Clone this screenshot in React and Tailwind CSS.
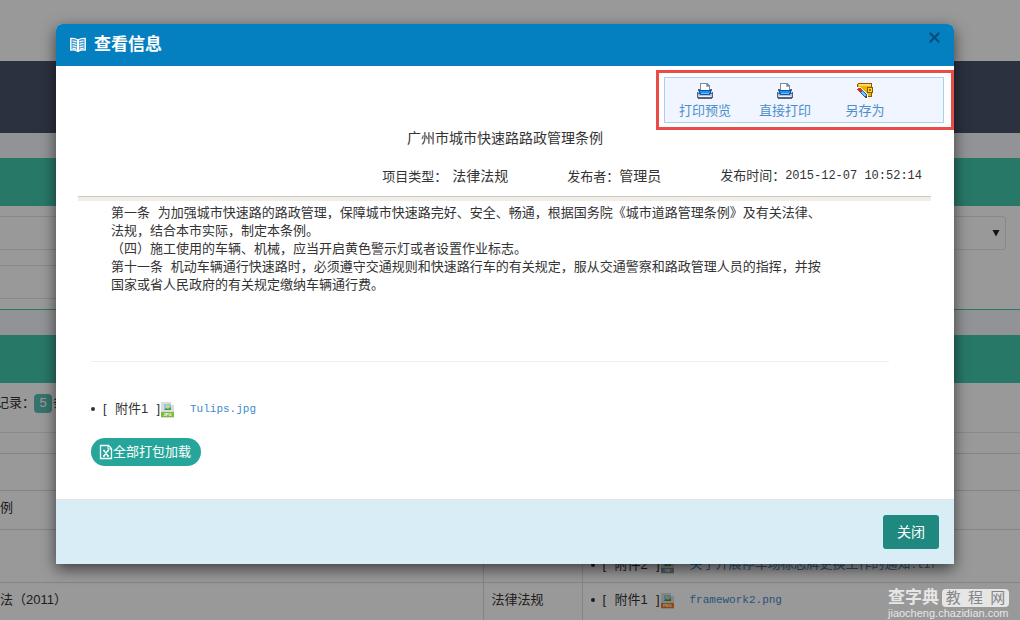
import { X } from "lucide-react";

const SONG = "font-['Liberation_Sans','Noto_Sans_CJK_SC',sans-serif]";
const MONO = "font-['Liberation_Mono','Noto_Sans_CJK_SC',monospace]";

const lines = [
  "第一条 为加强城市快速路的路政管理，保障城市快速路完好、安全、畅通，根据国务院《城市道路管理条例》及有关法律、",
  "法规，结合本市实际，制定本条例。",
  "（四）施工使用的车辆、机械，应当开启黄色警示灯或者设置作业标志。",
  "第十一条 机动车辆通行快速路时，必须遵守交通规则和快速路行车的有关规定，服从交通警察和路政管理人员的指挥，并按",
  "国家或省人民政府的有关规定缴纳车辆通行费。",
];

const tools = [
  { label: "打印预览", Icon: PrinterIcon },
  { label: "直接打印", Icon: PrinterIcon },
  { label: "另存为", Icon: SaveAsIcon },
];

export default function App() {
  return (
    <div className={`relative h-screen overflow-hidden text-[13px] text-[#333] ${SONG}`}>
      <Backdrop />
      <div className="absolute inset-0 bg-black/40" />
      <Watermark />
      <div className="absolute inset-x-0 top-0 pt-6 pl-14 pr-[66px]">
        <Dialog />
      </div>
    </div>
  );
}

function Backdrop() {
  return (
    <div className="bg-white">
      <div className="h-[61px]" />
      <div className="h-[72px] bg-[#485369]" />
      <div className="h-[25px] bg-[#f3f5fb]" />
      <div className="h-12 bg-[#43c9ad]" />
      <div className="h-[103px] pt-[10px] pr-[14px]">
        <div className="flex h-[34px] items-center rounded-r border border-l-0 border-[#e5e5e5] pr-[5px]">
          <select aria-label="类型" className="h-8 grow appearance-none" />
          <svg width="8" height="8" viewBox="0 0 8 8"><path d="M.5 1h7L4 7.500z" fill="#222" /></svg>
        </div>
        <div className="mt-[15px] h-[34px] w-1/2 border-y border-[#e5e5e5]" />
      </div>
      <div className="h-[26px] border-t border-[#43c9ad] bg-[#f3f5fb]" />
      <div className="h-12 bg-[#43c9ad]" />
      <div className="flex h-[49px] items-start pt-2">
        <span className="-ml-1 flex h-6 items-center">
          记录：
          <b className="-ml-px mr-px flex h-[19px] w-[18px] items-center justify-center rounded bg-[#5bc0b5] font-normal text-white">5</b>
          条
        </span>
      </div>
      <table className="w-full table-fixed border-collapse">
        <colgroup>
          <col className="w-[483px]" />
          <col className="w-[99px]" />
          <col />
        </colgroup>
        <tbody>
          <tr className="h-[21px] border-t border-[#e7e7e7]"><td /><td /><td /></tr>
          <tr className="h-[37px] border-t border-[#ddd]"><td /><td /><td /></tr>
          <tr className="h-[39px] border-t border-[#ddd]"><td className="pb-1">例</td><td /><td /></tr>
          <tr className="h-[53px] border-t border-[#ddd]">
            <td />
            <td className="border-l border-[#ddd]" />
            <td className="border-l border-[#ddd] pl-2 align-bottom">
              <div className="flex h-[34px] items-center">
                <Attachment n={2} kind="tif" name="关于开展停车场标志牌更换工作的通知" />
              </div>
            </td>
          </tr>
          <tr className="h-[38px] border-t border-[#ddd]">
            <td className="pb-1">法（2011）</td>
            <td className="border-l border-[#ddd] pb-1 pl-2">法律法规</td>
            <td className="border-l border-[#ddd] pb-1 pl-2">
              <Attachment n={1} kind="png" name="framework2" />
            </td>
          </tr>
        </tbody>
      </table>
    </div>
  );
}

function Dialog() {
  return (
    <div role="dialog" aria-labelledby="dialog-title" className="rounded-t-md bg-white shadow-[0_5px_15px_rgba(0,0,0,0.6)]">
      <header className="flex h-[42px] items-start justify-between rounded-t-md bg-[#047fbf] pr-[11px] pl-[14px]">
        <h1 id="dialog-title" className="flex h-[42px] items-center gap-2 text-[17px] font-bold text-white">
          <BookIcon />
          查看信息
        </h1>
        <button aria-label="关闭窗口" className="mt-[5px] text-[#034c73]">
          <X size={17} strokeWidth={2.5} />
        </button>
      </header>

      <div className="flex justify-end pt-1">
        <div className="h-[60px] w-[298px] border-[3px] border-[#e94b46] p-1 pl-[5px]">
          <div className="flex h-[46px] w-[280px] border border-[#a8d1ec] bg-[#f0f5ff]">
            {tools.map(({ label, Icon }) => (
              <button key={label} className="flex w-20 flex-col items-center pt-[5px] leading-5 text-[#4c8fca]">
                <Icon />
                <span className="mt-0.5">{label}</span>
              </button>
            ))}
          </div>
        </div>
      </div>

      <h2 className="h-4 text-center text-[14px] leading-4">广州市城市快速路路政管理条例</h2>

      <div className="mr-[23px] ml-[22px] mt-5 flex h-[31px] items-start justify-end border-b border-[#cfccbc] pr-[9px] leading-5">
        <span>项目类型：<span className="ml-[5px] text-[14px]">法律法规</span></span>
        <span className="ml-[59px]">发布者：<span className="text-[14px]">管理员</span></span>
        <span className="ml-[59px] flex">发布时间：<span className={`text-[12px] ${MONO}`}>2015-12-07 10:52:14</span></span>
      </div>
      <div className="mr-[23px] ml-[22px] h-1 bg-[#f1eee9]" />

      <div className={`h-[160px] pt-1 pl-[55px] leading-[18px] ${MONO}`}>
        {lines.map((line) => (
          <p key={line} className="whitespace-nowrap">{line}</p>
        ))}
      </div>
      <hr className="mr-[65px] ml-[35px] border-[#eee]" />

      <div className="pt-[37px] pl-[35px]">
        <Attachment n={1} kind="jpg" name="Tulips" />
        <button className="mt-[19px] flex h-7 w-[110px] items-center rounded-full bg-[#26a69a] pl-2 text-white">
          <SheetIcon />
          全部打包加载
        </button>
      </div>

      <footer className="mt-[33px] flex h-[65px] justify-end border-t border-[#e5e5e5] bg-[#d9edf7] pt-[15px] pr-[15px]">
        <button className="h-[34px] w-14 rounded-[3px] bg-[#1f897f] text-[14px] text-white">关闭</button>
      </footer>
    </div>
  );
}

function Attachment({ n, kind, name }) {
  // CJK names keep the body size, latin names use the smaller mono size
  const size = /^[\w.]+$/.test(name) ? "text-[11px]" : "text-[13px]";
  return (
    <div className="flex h-5 items-center whitespace-nowrap">
      <span className="mr-2 h-1 w-1 rounded-full bg-[#333]" />
      <span className="flex w-[57px] justify-between"><span>[</span><span>附件{n}</span><span>]</span></span>
      <FileIcon kind={kind} />
      <a href="#" className={`ml-[14px] text-[#428bca] ${MONO}`}>
        <span className={size}>{name}</span>
        <span className="text-[11px]">.{kind}</span>
      </a>
    </div>
  );
}

function FileIcon({ kind }) {
  const color = { jpg: "#7db93c", png: "#ef7a1a", tif: "#8d9aa6" }[kind];
  return (
    <svg width="16" height="16" viewBox="0 0 16 16" className="mt-0.5">
      <path d="M1 0h10l3 3v13h-13z" fill="#d9dddf" />
      <path d="M11 0v3h3z" fill="#fff" />
      <path d="M4 2h7v6h-7z" fill="#8cc9ee" />
      <circle cx="7.500" cy="4.500" r="1.500" fill="#f2d43a" />
      <path d="M4 8l2-2 2 1 3-2v3z" fill="#4e9a3c" />
      <path d="M1 10h13v5h-13z" fill={color} />
      <text x="7.500" y="14" textAnchor="middle" fontSize="4" fontWeight="700" fill="#fff">{kind.toUpperCase()}</text>
    </svg>
  );
}

function BookIcon() {
  return (
    <svg width="16" height="16" viewBox="0 0 16 16" fill="none" stroke="#fff">
      <path d="M.800 1.500q4-.5 7.200 1.500 3.200-2 7.200-1.500v11.500q-4-.5-7.200 1.500-3.200-2-7.200-1.500z" fill="#fff" fillOpacity="0.250" strokeWidth="1.400" />
      <path d="M8 3v12" strokeWidth="2" />
      <path d="M2.500 4q2.200 0 4 1.100M2.500 6.500q2.200 0 4 1.100M2.500 9q2.200 0 4 1.100M2.500 11.300q2.200 0 4 1.100M13.500 4q-2.200 0-4 1.100M13.500 6.500q-2.200 0-4 1.100M13.500 9q-2.200 0-4 1.100M13.500 11.300q-2.200 0-4 1.100" strokeWidth="1.200" />
    </svg>
  );
}

function PrinterIcon() {
  return (
    <svg width="16" height="16" viewBox="0 0 16 16" shapeRendering="crispEdges" className="shrink-0">
      <path d="M3 0h7l3 3v5h-10z" fill="#8189a0" />
      <path d="M4 1h6v2h2v5h-8z" fill="#fff" />
      <path d="M9 1h1v2h2v1h-3z" fill="#a9adc4" />
      <path d="M1 6h2v1h10v-1h2v3h1v6h-1v1h-14v-1h-1v-6h1z" fill="#59617a" />
      <path d="M1 8h14v2h-14z" fill="#c6cddc" />
      <path d="M1 11h14v3h-14z" fill="#b9c1d4" />
      <path d="M2 7h12v4h-1v1h-10v-1h-1z" fill="#0b57b0" />
      <path d="M3 8h10v2h-10z" fill="#1c92f0" />
      <path d="M4 10h8v1h-8z" fill="#6cc4ff" />
      <path d="M4 4h8v3h-8z" fill="#fff" />
      <path d="M2 13h12v1h-12z" fill="#eef1f6" />
    </svg>
  );
}

function SaveAsIcon() {
  return (
    <svg width="16" height="16" viewBox="0 0 16 16" shapeRendering="crispEdges" className="shrink-0">
      <path d="M1 0h14v4h1v6h-1v4h-5l-9-9h-1v-4h1z" fill="#8c5a00" />
      <path d="M1 1h13v12h-4l-9-8z" fill="#f0b400" />
      <path d="M2 1h12v2h-12z" fill="#ffdc55" />
      <path d="M10 4h6v6h-6z" fill="#8c5a00" />
      <path d="M11 5h4v4h-4z" fill="#ffd52b" />
      <path d="M12 6h2v2h-2z" fill="#a06a00" />
      <path d="M0 4h3l8 8v4h-3l-8-8z" fill="#fff" />
      <path d="M1 5h2l2 2-2 3-3-3v-1z" fill="#e02a22" />
      <path d="M5 7l5 5-2 3-5-5z" fill="#1b5fb8" />
      <path d="M5 8l4 4-1 2-4-4z" fill="#6fc0ff" />
      <path d="M10 12v3h-2z" fill="#5a3a10" />
    </svg>
  );
}

function SheetIcon() {
  return (
    <svg width="14" height="16" viewBox="0 0 14 16" fill="none" stroke="#fff">
      <path d="M1.500 1.500h8l3 3v10h-11z" strokeWidth="1.300" />
      <path d="M9 1.500v3.500h3.500" />
      <path d="M5 6.500l4 5.500M9 6.500l-4 5.500M4 6.500h2M8 6.500h2M4 12h2M8 12h2" strokeWidth="1.300" />
    </svg>
  );
}

function Watermark() {
  return (
    <div className="absolute right-[11px] bottom-px text-[#e6e6e6]">
      <div className="flex items-center gap-[3px]">
        <span className="text-[17px] leading-[18px] font-bold">查字典</span>
        <span className="flex h-[18px] w-[67px] items-center justify-around rounded bg-[#e6e6e6] text-[15px] text-[#858585]">
          <i className="not-italic">教</i><i className="not-italic">程</i><i className="not-italic">网</i>
        </span>
      </div>
      <div className="text-[11px] leading-3">jiaocheng.chazidian.com</div>
    </div>
  );
}
